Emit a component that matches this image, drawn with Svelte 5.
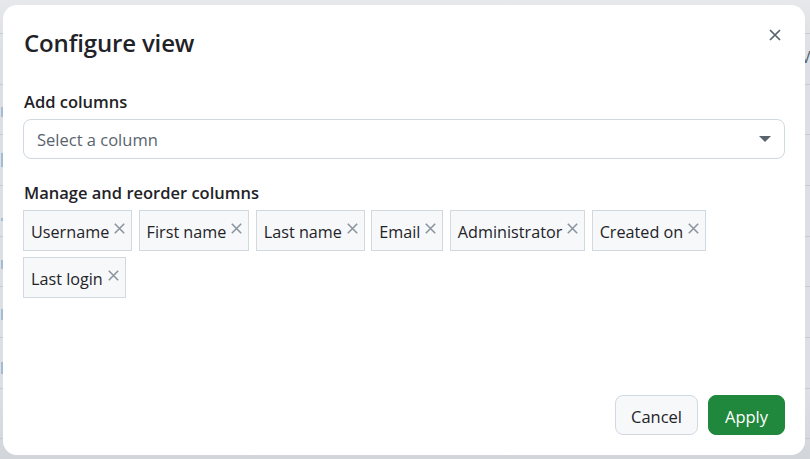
<script>
    let columns = ['Username', 'First name', 'Last name', 'Email', 'Administrator', 'Created on', 'Last login'];

    // bits of the page's blue links that show beside the modal
    let slivers = [
        { top: 107, height: 10 },
        { top: 153, height: 14 },
        { top: 218, height: 3 },
        { top: 260, height: 9 },
        { top: 309, height: 11 },
        { top: 362, height: 12 }
    ];
</script>

<div class="backdrop">
    {#each slivers as s}
        <i class="sliver" style="top: {s.top}px; height: {s.height}px"></i>
    {/each}
    <span class="behind">V</span>

    <div class="modal">
        <header>
            <h2>Configure view</h2>
            <button class="close" aria-label="Close">
                <svg width="12" height="12" viewBox="0 0 12 12"><path d="M1 1l10 10M11 1L1 11" /></svg>
            </button>
        </header>

        <div class="body">
            <label for="add">Add columns</label>
            <div class="select" id="add">
                <span>Select a column</span>
                <i class="caret"></i>
            </div>

            <label class="second" for="manage">Manage and reorder columns</label>
            <div class="tags" id="manage">
                {#each columns as col}
                    <div class="tag">
                        <span>{col}</span>
                        <svg width="11" height="11" viewBox="0 0 11 11"><path d="M.8.8l9.4 9.4M10.2.8L.8 10.2" /></svg>
                    </div>
                {/each}
            </div>
        </div>

        <footer>
            <button class="btn cancel">Cancel</button>
            <button class="btn apply">Apply</button>
        </footer>
    </div>
</div>

<style>
    :global(body) {
        margin: 0;
        font-family: "Open Sans", "Noto Sans", sans-serif;
        color: #1f2328;
    }

    .backdrop {
        position: relative;
        height: 459px;
        box-sizing: border-box;
        padding: 5px 5px 4px 3px;
        overflow: hidden;
        background:
            repeating-linear-gradient(to bottom, transparent 0, transparent 33px, #c5cbd1 33px, #c5cbd1 34px, transparent 34px, transparent 50.67px),
            linear-gradient(to bottom, #e6e8eb, #dcdfe3 12%, #dcdfe3 85%, #d2d6da);
    }

    .sliver {
        position: absolute;
        left: 1px;
        width: 2px;
        background: #a3bbd3;
    }

    .behind {
        position: absolute;
        left: 801px;
        top: 46px;
        font-size: 16px;
        color: #59636e;
    }

    .modal {
        position: relative;
        height: 450px;
        box-sizing: border-box;
        display: flex;
        flex-direction: column;
        background: #fff;
        border-radius: 14px;
        padding: 0 20px 20px 21px;
    }

    header {
        display: flex;
        justify-content: space-between;
        align-items: flex-start;
        height: 86px;
        padding-top: 20px;
        box-sizing: border-box;
    }

    h2 {
        margin: 0;
        font-size: 24px;
        line-height: 36px;
        font-weight: 600;
        letter-spacing: -0.15px;
    }

    .close {
        border: 0;
        background: none;
        padding: 0;
        margin: 4px 4px 0 0;
        display: flex;
    }

    .close path {
        stroke: #59636e;
        stroke-width: 1.7;
        fill: none;
    }

    .body {
        flex: 1;
    }

    label {
        display: block;
        font-size: 16.5px;
        font-weight: 600;
        line-height: 22px;
        margin-bottom: 6px;
    }

    .second {
        margin-top: 23px;
    }

    .select {
        height: 40px;
        box-sizing: border-box;
        display: flex;
        align-items: center;
        justify-content: space-between;
        margin-left: -1px;
        padding: 0 13px;
        border: 1px solid #d1d9e0;
        border-radius: 8px;
        font-size: 16.5px;
        color: #59636e;
    }

    .caret {
        width: 0;
        height: 0;
        border-left: 6px solid transparent;
        border-right: 6px solid transparent;
        border-top: 6px solid #59636e;
    }

    .tags {
        display: flex;
        flex-wrap: wrap;
        gap: 6px 6.4px;
        margin-left: -1px;
    }

    .tag {
        height: 41px;
        box-sizing: border-box;
        display: flex;
        align-items: center;
        gap: 5px;
        padding: 2px 6px 0 7px;
        background: #f6f8fa;
        border: 1px solid #d1d9e0;
        font-size: 16.2px;
    }

    .tag svg {
        margin-top: -6px;
    }

    .tag path {
        stroke: #8c959f;
        stroke-width: 1.6;
        fill: none;
    }

    footer {
        display: flex;
        justify-content: flex-end;
        gap: 10px;
    }

    .btn {
        height: 40px;
        box-sizing: border-box;
        border-radius: 8px;
        font-family: inherit;
        font-size: 16.5px;
        padding: 2px 0 0;
    }

    .cancel {
        width: 83px;
        background: #f6f8fa;
        border: 1px solid #d1d9e0;
        color: #1f2328;
    }

    .apply {
        width: 77px;
        background: #1f883d;
        border: 1px solid #1f883d;
        color: #fff;
    }
</style>
